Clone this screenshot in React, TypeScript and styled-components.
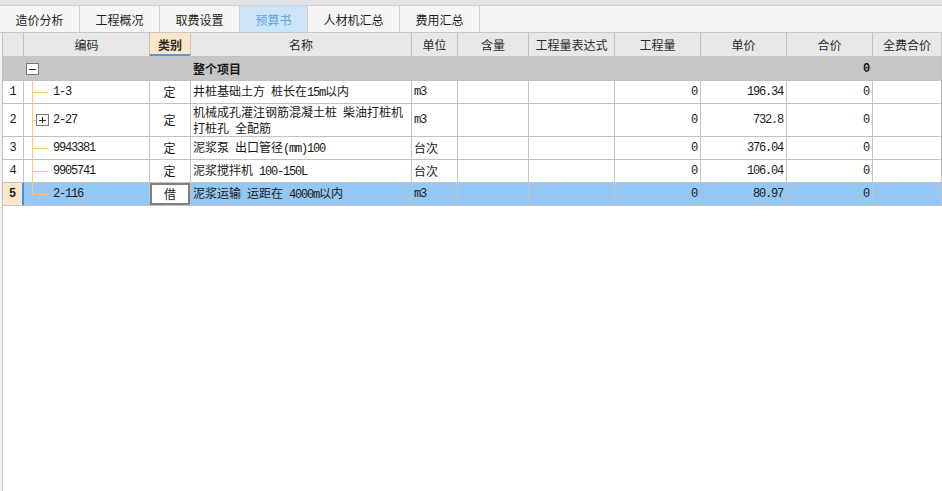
import React from 'react';
import styled, { createGlobalStyle } from 'styled-components';

const GlobalStyle = createGlobalStyle`
  html, body {
    margin: 0;
    padding: 0;
    background: #ffffff;
  }
  body {
    font-family: "Noto Sans CJK SC", "Liberation Sans", sans-serif;
    font-size: 12px;
    color: #1a1a1a;
  }
  * {
    box-sizing: border-box;
  }
`;

const COLS = '21px 126px 41px 221px 46px 71px 86px 86px 86px 86px 1fr';
const LINE = '#c2c2c2';
const TREE = '#fcc67c';

const Page = styled.div`
  width: 942px;
  height: 491px;
  display: flex;
  flex-direction: column;
  overflow: hidden;
`;

const TopStrip = styled.div`
  height: 5px;
  background: #e4e4e4;
`;

const TabBar = styled.div`
  height: 28px;
  display: flex;
  background: #f5f5f5;
  border-top: 1px solid #d2d2d2;
  border-bottom: 1px solid #c8c8c8;
`;

const Tab = styled.div<{ $w: number; $active?: boolean }>`
  width: ${p => p.$w}px;
  display: flex;
  align-items: center;
  justify-content: center;
  border-right: 1px solid #d0d0d0;
  background: ${p => (p.$active ? '#cce4f8' : 'transparent')};
  color: ${p => (p.$active ? '#5aa3e6' : '#1e1e1e')};
  font-size: 12px;
`;

const Body = styled.div`
  flex: 1;
  display: flex;
  background: #f2f2f2;
  padding-left: 2px;
`;

const Sheet = styled.div`
  flex: 1;
  background: #ffffff;
  border-left: 1px solid ${LINE};
`;

const HeaderRow = styled.div`
  display: grid;
  grid-template-columns: ${COLS};
  height: 24px;
  background: #e8e8e8;
  border-bottom: 1px solid ${LINE};
`;

const HeadCell = styled.div<{ $hot?: boolean }>`
  display: flex;
  align-items: center;
  justify-content: center;
  border-right: 1px solid ${LINE};
  color: #2a2a2a;
  font-weight: ${p => (p.$hot ? 700 : 400)};
  background: ${p => (p.$hot ? '#fde6c9' : 'transparent')};
  box-shadow: ${p => (p.$hot ? 'inset 0 -2px 0 #4b9be6' : 'none')};
`;

const Row = styled.div<{ $h: number; $bg: string }>`
  display: grid;
  grid-template-columns: ${COLS};
  height: ${p => p.$h}px;
  background: ${p => p.$bg};
  border-bottom: 1px solid ${LINE};
`;

const Cell = styled.div<{ $align?: 'left' | 'center' | 'right'; $bold?: boolean; $flush?: boolean }>`
  position: relative;
  display: flex;
  align-items: center;
  justify-content: ${p =>
    p.$align === 'right' ? 'flex-end' : p.$align === 'center' ? 'center' : 'flex-start'};
  padding: ${p => (p.$flush ? '0' : '0 3px 0 2px')};
  border-right: 1px solid ${LINE};
  font-weight: ${p => (p.$bold ? 700 : 400)};
  line-height: 14px;
  color: #1a1a1a;
  overflow: hidden;
`;

const NumCell = styled(Cell)<{ $cur?: boolean }>`
  justify-content: center;
  padding: 0;
  font-family: "Liberation Mono", monospace;
  font-size: 12px;
  background: ${p => (p.$cur ? '#fde6c9' : 'transparent')};
  font-weight: ${p => (p.$cur ? 700 : 400)};
  border-right: ${p => (p.$cur ? '2px solid #3f8fe8' : `1px solid ${LINE}`)};
`;

const Mono = styled.span`
  font-family: "Liberation Mono", "Noto Sans CJK SC", monospace;
  font-size: 12px;
  letter-spacing: -1.2px;
`;

const NameText = styled.span`
  display: flex;
  flex-direction: column;
  font-family: "Noto Sans CJK SC", sans-serif;
  font-size: 12px;
  & > span {
    display: block;
    line-height: 16px;
    white-space: pre;
  }
  & b {
    font-family: "Liberation Mono", monospace;
    font-weight: 400;
    font-size: 12px;
    letter-spacing: -1.2px;
  }
`;

const TypeBox = styled.div`
  display: flex;
  align-items: center;
  justify-content: center;
  width: 100%;
  height: 100%;
  background: #ffffff;
  border: 2px solid #808080;
`;

const CodeCell = styled.div<{ $tree?: 'root' | 'mid' | 'last' }>`
  position: relative;
  display: flex;
  align-items: center;
  padding-left: 29px;
  border-right: 1px solid ${LINE};

  &::before {
    content: '';
    display: ${p => (p.$tree ? 'block' : 'none')};
    position: absolute;
    left: 8px;
    width: 1px;
    background: ${TREE};
    top: ${p => (p.$tree === 'root' ? '18px' : '0')};
    bottom: ${p => (p.$tree === 'last' ? '50%' : '0')};
  }

  &::after {
    content: '';
    display: ${p => (p.$tree && p.$tree !== 'root' ? 'block' : 'none')};
    position: absolute;
    left: 8px;
    top: 50%;
    width: 16px;
    height: 1px;
    background: ${TREE};
  }
`;

const Toggle = styled.span<{ $root?: boolean }>`
  position: absolute;
  left: ${p => (p.$root ? '2px' : '12px')};
  top: ${p => (p.$root ? '6px' : '10px')};
  width: 13px;
  height: 12px;
  border: 1px solid #7a7a7a;
  background: #ffffff;
  z-index: 1;

  &::before {
    content: '';
    position: absolute;
    left: 2px;
    right: 2px;
    top: 4.5px;
    height: 1px;
    background: #333;
  }
  &::after {
    content: '';
    display: ${p => (p.$root ? 'none' : 'block')};
    position: absolute;
    top: 2px;
    bottom: 2px;
    left: 5px;
    width: 1px;
    background: #333;
  }
`;

const RootLabel = styled.span`
  font-weight: 700;
  font-size: 12px;
`;

const tabs = [
  { label: '造价分析', w: 80 },
  { label: '工程概况', w: 80 },
  { label: '取费设置', w: 80 },
  { label: '预算书', w: 68, active: true },
  { label: '人材机汇总', w: 92 },
  { label: '费用汇总', w: 80 },
];

const headers = ['', '编码', '类别', '名称', '单位', '含量', '工程量表达式', '工程量', '单价', '合价', '全费合价'];

const SP = '\u2002';

type Item = {
  no: string;
  code: string;
  type: string;
  lines: React.ReactNode[];
  unit: string;
  price: string;
  h: number;
  expandable?: boolean;
};

const items: Item[] = [
  { no: '1', code: '1-3', type: '定', lines: [<>井桩基础土方{SP}桩长在<b>15m</b>以内</>], unit: 'm3', price: '196.34', h: 23 },
  {
    no: '2',
    code: '2-27',
    type: '定',
    lines: [<>机械成孔灌注钢筋混凝土桩{SP}柴油打桩机</>, <>打桩孔{SP}全配筋</>],
    unit: 'm3',
    price: '732.8',
    h: 33,
    expandable: true,
  },
  { no: '3', code: '9943381', type: '定', lines: [<>泥浆泵{SP}出口管径<b>(mm)100</b></>], unit: '台次', price: '376.04', h: 23 },
  { no: '4', code: '9905741', type: '定', lines: [<>泥浆搅拌机{SP}<b>100-150L</b></>], unit: '台次', price: '106.04', h: 23 },
  { no: '5', code: '2-116', type: '借', lines: [<>泥浆运输{SP}运距在{SP}<b>4000m</b>以内</>], unit: 'm3', price: '80.97', h: 23 },
];

const App: React.FC = () => {
  return (
    <Page>
      <GlobalStyle />
      <TopStrip />
      <TabBar>
        {tabs.map(t => (
          <Tab key={t.label} $w={t.w} $active={t.active}>
            {t.label}
          </Tab>
        ))}
      </TabBar>
      <Body>
        <Sheet>
          <HeaderRow>
            {headers.map((h, i) => (
              <HeadCell key={i} $hot={h === '类别'}>
                {h}
              </HeadCell>
            ))}
          </HeaderRow>

          <Row $h={24} $bg="#c6c6c6">
            <NumCell />
            <CodeCell $tree="root">
              <Toggle $root />
            </CodeCell>
            <Cell />
            <Cell>
              <RootLabel>整个项目</RootLabel>
            </Cell>
            <Cell />
            <Cell />
            <Cell />
            <Cell />
            <Cell />
            <Cell $align="right" $bold>
              <Mono>0</Mono>
            </Cell>
            <Cell />
          </Row>

          {items.map((it, idx) => {
            const current = idx === items.length - 1;
            return (
              <Row key={it.no} $h={it.h} $bg={current ? '#94c7f4' : '#ffffff'}>
                <NumCell $cur={current}>{it.no}</NumCell>
                <CodeCell $tree={current ? 'last' : 'mid'}>
                  {it.expandable && <Toggle />}
                  <Mono>{it.code}</Mono>
                </CodeCell>
                <Cell $align="center" $flush={current}>
                  {current ? <TypeBox>{it.type}</TypeBox> : it.type}
                </Cell>
                <Cell>
                  <NameText>
                    {it.lines.map((l, i) => (
                      <span key={i}>{l}</span>
                    ))}
                  </NameText>
                </Cell>
                <Cell>
                  {it.unit === 'm3' ? <Mono>{it.unit}</Mono> : it.unit}
                </Cell>
                <Cell />
                <Cell />
                <Cell $align="right">
                  <Mono>0</Mono>
                </Cell>
                <Cell $align="right">
                  <Mono>{it.price}</Mono>
                </Cell>
                <Cell $align="right">
                  <Mono>0</Mono>
                </Cell>
                <Cell />
              </Row>
            );
          })}
        </Sheet>
      </Body>
    </Page>
  );
};

export default App;
